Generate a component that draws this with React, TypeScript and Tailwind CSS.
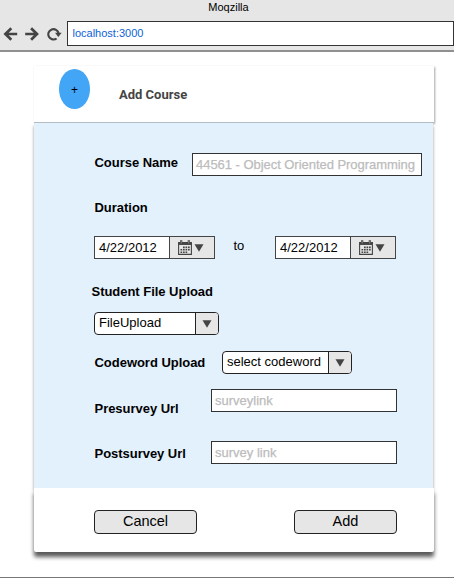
import React from "react";

const label = "block whitespace-nowrap text-[13px] leading-4 font-bold text-black tracking-[-0.03px]";

function Down() {
  return (
    <svg width="10" height="8" viewBox="0 0 10 8" className="block shrink-0">
      <path d="M.5.2h9L5 7.7z" fill="#444" />
    </svg>
  );
}

function CalendarIcon() {
  return (
    <svg width="14" height="15" viewBox="0 0 14 15" className="block shrink-0" fill="none" stroke="#444">
      <path d="M.6 2.5h12.8v11.9H.6z" strokeWidth="1.1" />
      <path d="M.5 3.8h13" strokeWidth="2.3" />
      <path d="M3.2.3v4M10.8.3v4" strokeWidth="2.2" />
      <path d="M3.2.8v2.7M10.8.8v2.7" stroke="#bbb" strokeWidth=".6" />
      <path d="M5 7.4h7M2.5 9.8H12M2.5 12.2h7" strokeWidth="1.6" strokeDasharray="1.7 .8" />
    </svg>
  );
}

function DateField() {
  return (
    <div className="flex h-[23px] w-[121px] shrink-0 border border-[#444] bg-white">
      <div className="w-[75px] border-r border-[#444] pl-1 text-[13px] leading-[21px]">4/22/2012</div>
      <div className="flex flex-1 items-center gap-0.5 bg-[#e6e6e6] pl-2">
        <CalendarIcon />
        <Down />
      </div>
    </div>
  );
}

function Select({ text, width }: { text: string; width: string }) {
  return (
    <div className={`flex h-[23px] shrink-0 overflow-hidden rounded-[4px] border border-[#222] bg-white ${width}`}>
      <div className="flex-1 whitespace-nowrap pl-1 text-[13px] leading-5">{text}</div>
      <div className="flex w-[23px] items-center justify-center border-l border-[#222] bg-[#e6e6e6]">
        <Down />
      </div>
    </div>
  );
}

function Field({ text, width }: { text: string; width: string }) {
  return (
    <div className={`h-[23px] shrink-0 whitespace-nowrap border border-[#333] bg-white pl-[3px] text-[13px] leading-[21px] text-[#bcbcbc] [-webkit-text-stroke:0.25px_#bcbcbc] ${width}`}>
      {text}
    </div>
  );
}

export default function App() {
  return (
    <div className="flex h-[580px] w-[454px] flex-col overflow-hidden bg-white font-['Liberation_Sans',Arial,sans-serif] text-black">
      <header className="h-[52px] shrink-0 border-b-2 border-[#909090] bg-[#e6e6e6]">
        <div className="h-[21px] pl-[3px] pt-px text-center text-[11px] leading-[13px]">Moqzilla</div>
        <div className="flex h-[25px]">
          <div className="flex w-[67px] items-center gap-[7px] pl-[3px]">
            <svg width="15" height="14" viewBox="0 0 15 14" fill="none" stroke="#444" strokeWidth="2.7">
              <path d="M14.2 7H2.5M8.3 1.2 2.4 7l5.9 5.8" />
            </svg>
            <svg width="15" height="14" viewBox="0 0 15 14" fill="none" stroke="#444" strokeWidth="2.7">
              <path d="M.2 7h11.7M6.1 1.2 12 7l-5.9 5.8" />
            </svg>
            <svg width="15" height="14" viewBox="0 0 15 14" fill="none" stroke="#444" strokeWidth="2.1">
              <path d="M9.6 11.5A5.2 5.2 0 1 1 11.6 6.3" />
              <path d="M8 5.7h6.7l-3.4 4.4z" fill="#444" stroke="none" />
            </svg>
          </div>
          <div className="flex-1 border border-[#333] bg-white pl-[4.5px] text-[11px] leading-[23px] text-[#0c62d8]">localhost:3000</div>
        </div>
      </header>

      <main className="ml-[34px] mt-[14px] w-[400px] shrink-0">
        <section className="flex h-[57px] border-b border-[#b3bdc6] bg-white pl-[25px] pt-[3px] shadow-[1px_1px_2px_rgba(0,0,0,.35)]">
          <div className="flex h-10 w-[31px] items-center justify-center rounded-[50%] bg-[#42a5f5] pt-px text-[12px]">+</div>
          <h1 className="ml-[29px] mt-[18px] font-[Roboto,sans-serif] text-[13px] leading-4 font-bold text-[#444]">Add Course</h1>
        </section>

        <section className="relative h-[365px] w-[399px] bg-[#e3f1fd] shadow-[0_3px_3px_rgba(0,0,0,.4)]">
          <div className="flex h-[77px] pt-[30px]">
            <div className="w-[158px] pl-[60.5px] pt-[2px]"><span className={label}>Course Name</span></div>
            <Field text="44561 - Object Oriented Programming" width="w-[230px] tracking-[-0.04px]" />
          </div>
          <div className="h-[36px] pl-[60.5px]"><span className={label}>Duration</span></div>
          <div className="flex h-[48px] pl-[60px]">
            <DateField />
            <span className="w-[60px] pl-[18.5px] pt-[2px] text-[13px] leading-4">to</span>
            <DateField />
          </div>
          <div className="h-[28px] pl-[57.5px]"><span className={label}>Student File Upload</span></div>
          <div className="h-[39px] pl-[60px]"><Select text="FileUpload" width="w-[125px]" /></div>
          <div className="flex h-[38px]">
            <div className="w-[188px] pl-[60.5px] pt-[4px]"><span className={label}>Codeword Upload</span></div>
            <Select text="select codeword" width="w-[130px]" />
          </div>
          <div className="flex h-[52px]">
            <div className="w-[177px] pl-[60.5px] pt-[12px]"><span className={label}>Presurvey Url</span></div>
            <Field text="surveylink" width="w-[186px]" />
          </div>
          <div className="flex">
            <div className="w-[177px] pl-[60.5px] pt-[5px]"><span className={label}>Postsurvey Url</span></div>
            <Field text="survey link" width="w-[186px]" />
          </div>
        </section>

        <footer className="relative flex h-16 justify-between rounded-b-[2px] bg-white pl-[60px] pr-[37px] pt-[22px] shadow-[0_5px_4px_rgba(0,0,0,.65)]">
          <button className="h-6 w-[103px] rounded-[4px] border border-[#222] bg-[#e6e6e6] pb-[2px] text-[14.5px] leading-5">Cancel</button>
          <button className="h-6 w-[103px] rounded-[4px] border border-[#222] bg-[#e6e6e6] pb-[2px] text-[14.5px] leading-5">Add</button>
        </footer>
      </main>
      <div className="mt-[25px] h-px shrink-0 bg-[#777]" />
    </div>
  );
}
